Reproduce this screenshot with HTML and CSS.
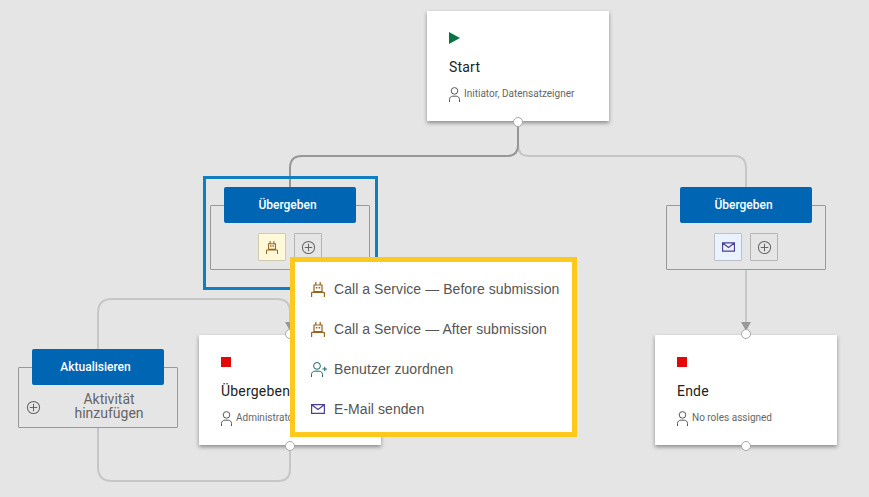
FILE: index.html
```html
<!DOCTYPE html>
<html lang="de">
<head>
<meta charset="utf-8">
<title>Workflow</title>
<link rel="stylesheet" href="styles.css">
</head>
<body>
<svg class="defs" width="0" height="0" aria-hidden="true">
  <symbol id="i-robot" viewBox="0 0 14 15">
    <path fill="none" stroke="currentColor" stroke-width="1.2" d="M4.800 0V3M9.200 0V3M3 3h8v6.500H3zM.6 15V11.200c0-.5.300-.8.800-.8h11.200c.5 0 .8.300.8.800V15"/>
    <path fill="currentColor" d="M4.800 5h1.600v1.600H4.800zM7.600 5h1.600v1.600H7.600z"/>
  </symbol>
  <symbol id="i-person" viewBox="0 0 11 15">
    <circle cx="5.500" cy="3.900" r="3.300" fill="none" stroke="currentColor"/>
    <path fill="none" stroke="currentColor" d="M.5 15v-2.500c0-2 1.500-3.300 3.300-3.300h3.400c1.800 0 3.300 1.300 3.300 3.300V15"/>
  </symbol>
  <symbol id="i-person-add" viewBox="0 0 16 15">
    <circle cx="6" cy="3.900" r="3.400" fill="none" stroke="currentColor"/>
    <path fill="none" stroke="currentColor" d="M.5 15v-2.500c0-2 1.500-3.300 3.300-3.300h4.400c1.800 0 3.300 1.300 3.300 3.300V15M11.500 7h4.500M13.750 4.750v4.500"/>
  </symbol>
  <symbol id="i-mail" viewBox="0 0 14 10">
    <path fill="none" stroke="currentColor" stroke-width="1.200" d="M.6.6h12.800v8.800H.6zM1 1l6 4.500L13 1"/>
  </symbol>
  <symbol id="i-plus" viewBox="0 0 16 16">
    <circle cx="8" cy="8" r="6.500" fill="none" stroke="currentColor" stroke-width="1.100"/>
    <path fill="none" stroke="currentColor" stroke-width="1.100" d="M8 4v8M4 8h8"/>
  </symbol>
</svg>

<main class="canvas">
  <svg class="wires" width="869" height="497" viewBox="0 0 869 497" aria-hidden="true">
    <path class="wire" d="M518 125V145Q518 156 529 156H734Q746 156 746 168V325"/>
    <path class="wire" d="M290 446V469Q290 481 278 481H112Q98 481 98 467V313Q98 299 112 299H277Q290 299 290 312V325"/>
    <path class="wire wire-active" d="M518 125V145Q518 156 507 156H302Q290 156 290 168V190"/>
    <path class="arrow" d="M285 322h10l-5 9zM741 322h10l-5 9z"/>
  </svg>

  <article class="card card-start">
    <svg class="state" width="11" height="12" viewBox="0 0 11 12"><path class="play" d="M0 0l11 6-11 6z"/></svg>
    <h2 class="card-title">Start</h2>
    <p class="card-roles"><svg class="person" width="11" height="15"><use href="#i-person"/></svg>Initiator, Datensatzeigner</p>
    <span class="port port-bottom"></span>
  </article>

  <article class="card card-submit">
    <span class="stop"></span>
    <h2 class="card-title">Übergeben</h2>
    <p class="card-roles"><svg class="person" width="11" height="15"><use href="#i-person"/></svg>Administrator</p>
    <span class="port port-top"></span>
    <span class="port port-bottom"></span>
  </article>

  <article class="card card-end">
    <span class="stop"></span>
    <h2 class="card-title">Ende</h2>
    <p class="card-roles"><svg class="person" width="11" height="15"><use href="#i-person"/></svg>No roles assigned</p>
    <span class="port port-top"></span>
    <span class="port port-bottom"></span>
  </article>

  <div class="selection"></div>

  <section class="group group-a">
    <button class="group-head">Übergeben</button>
    <div class="actions">
      <span class="action action-service"><svg width="12" height="13"><use href="#i-robot"/></svg></span>
      <span class="action action-add"><svg width="15" height="15"><use href="#i-plus"/></svg></span>
    </div>
  </section>

  <section class="group group-b">
    <button class="group-head">Übergeben</button>
    <div class="actions">
      <span class="action action-mail"><svg width="13" height="10"><use href="#i-mail"/></svg></span>
      <span class="action action-add"><svg width="15" height="15"><use href="#i-plus"/></svg></span>
    </div>
  </section>

  <section class="group group-c">
    <button class="group-head">Aktualisieren</button>
    <div class="add-row">
      <svg class="add-icon" width="15" height="15"><use href="#i-plus"/></svg>
      <span class="add-label">Aktivität hinzufügen</span>
    </div>
  </section>

  <ul class="menu">
    <li class="menu-item"><svg class="mi-service" width="14" height="15"><use href="#i-robot"/></svg>Call a Service — Before submission</li>
    <li class="menu-item"><svg class="mi-service" width="14" height="15"><use href="#i-robot"/></svg>Call a Service — After submission</li>
    <li class="menu-item"><svg class="mi-user" width="16" height="15"><use href="#i-person-add"/></svg>Benutzer zuordnen</li>
    <li class="menu-item"><svg class="mi-mail" width="14" height="10"><use href="#i-mail"/></svg>E-Mail senden</li>
  </ul>
</main>
</body>
</html>
```
FILE: styles.css
```css
* { box-sizing: border-box; }
html, body { margin: 0; padding: 0; }
body { background: #e5e5e5; font-family: Roboto, "Liberation Sans", sans-serif; overflow: hidden; }
.defs { position: absolute; }
.canvas { position: relative; width: 869px; height: 497px; overflow: hidden; }

.wires { position: absolute; left: 0; top: 0; }
.wire { fill: none; stroke: #c6c6c6; stroke-width: 2; }
.wire-active { stroke: #979797; }
.arrow { fill: #999; }

.card {
  position: absolute;
  width: 182px;
  height: 110px;
  padding: 21px 22px 0;
  background: #fff;
  box-shadow: 0 2px 4px rgba(0, 0, 0, .4);
  display: flex;
  flex-direction: column;
  align-items: flex-start;
}
.card-start { left: 427px; top: 11px; }
.card-submit { left: 199px; top: 335px; }
.card-end { left: 655px; top: 335px; }

.state { display: block; flex: none; }
.play { fill: #0a7346; }
.stop { display: block; width: 10px; height: 10px; background: #e30808; margin: 1px 0 1px; flex: none; }
.card-title { margin: 15px 0 0; font-size: 14px; line-height: 16px; font-weight: 400; letter-spacing: .2px; color: #222; white-space: nowrap; }
.card-roles { margin: 11px 0 0; display: flex; align-items: center; gap: 4px; font-size: 10px; line-height: 16px; color: #666; white-space: nowrap; }
.person { color: #555; flex: none; }

.port { position: absolute; left: 86px; width: 10px; height: 10px; border-radius: 50%; background: #fff; border: 1px solid #a6a6a6; }
.port-top { top: -6px; }
.port-bottom { bottom: -6px; }

.selection { position: absolute; left: 203px; top: 176px; width: 175px; height: 114px; border: 3px solid #0f7fc0; }

.group { position: absolute; width: 160px; border: 1px solid #999; border-radius: 1px; background: #e5e5e5; }
.group-a { left: 210px; top: 205px; height: 65px; }
.group-b { left: 666px; top: 205px; height: 65px; }
.group-c { left: 18px; top: 367px; height: 61px; }
.group-head {
  display: block;
  width: 132px;
  height: 36px;
  margin: -19px 0 0 13px;
  padding: 0 5px 0 0;
  border: 0;
  border-radius: 2px;
  background: #0065b3;
  color: #fff;
  font: 500 12px/36px Roboto, "Liberation Sans", sans-serif;
}
.actions { display: flex; justify-content: center; gap: 8px; margin-top: 10px; }
.action { width: 28px; height: 28px; border: 1px solid #b5b5b5; border-radius: 1px; display: flex; align-items: center; justify-content: center; }
.action-service { background: #fff8d9; border-color: #cfcab0; color: #95641f; }
.action-mail { background: #eaf2fd; border-color: #bcc2cc; color: #4d3f95; }
.action-add { color: #666; }

.add-row { display: flex; align-items: center; padding: 0 0 0 7px; margin-top: 7px; }
.add-icon { color: #666; flex: none; margin-top: 2px; }
.add-label { width: 90px; margin-left: 23px; text-align: center; font-size: 14px; line-height: 14px; color: #666; }

.menu { position: absolute; left: 290px; top: 257px; width: 287px; height: 180px; margin: 0; padding: 7px 0 0 16px; list-style: none; background: #fff; border: 5px solid #fcc91c; }
.menu-item { height: 40px; display: flex; align-items: center; font: 14px/40px "Liberation Sans", Arial, sans-serif; letter-spacing: .06px; color: #555; white-space: nowrap; }
.menu-item svg { flex: none; margin-right: 9px; }
.mi-service { color: #95641f; }
.mi-user { color: #1a6668; margin-right: 7px !important; }
.mi-mail { color: #4d3f95; }
```
